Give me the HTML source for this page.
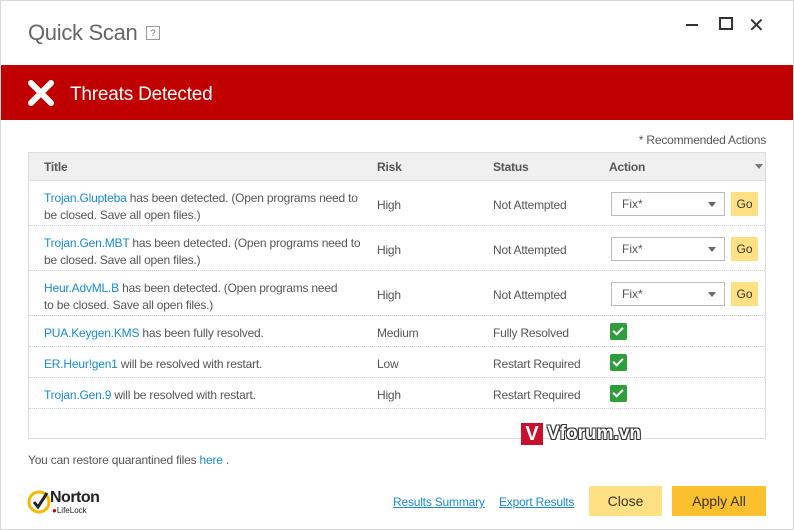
<!DOCTYPE html><html><head><style>
body{margin:0;width:794px;height:530px;background:#fff;font-family:"Liberation Sans",sans-serif;position:relative;overflow:hidden;color:#555}
.a{position:absolute}
.win{left:0;top:0;width:792px;height:528px;border:1px solid #d8d8d8}
.t{font-size:12px;color:#555;letter-spacing:-0.2px}
a,.lk{color:#1a8bd0;text-decoration:none}
.row{position:absolute;left:29px;width:736px;border-bottom:1px dotted #ccc}
.sel{position:absolute;left:611px;width:112px;height:22px;border:1px solid #bbb;font-size:12px;line-height:22px;text-indent:10px;color:#555}
.sel:after{content:"";position:absolute;right:8px;top:9px;border:4px solid transparent;border-top:5px solid #666}
.go{position:absolute;left:731px;width:27px;height:24px;background:#ffe082;font-size:12px;line-height:24px;text-align:center;color:#333}
.ck{position:absolute;left:610px;width:17px;height:17px;background:#2e9e3a;border-radius:2px}
.ck:after{content:"";position:absolute;left:5px;top:2px;width:4px;height:8px;border:solid #fff;border-width:0 2px 2px 0;transform:rotate(45deg)}
</style></head><body>
<div class="a win"></div>
<div class="a" style="left:28px;top:20px;font-size:22px;color:#666;letter-spacing:-0.3px">Quick Scan</div>
<div class="a" style="left:146px;top:26px;width:12px;height:12px;border:1px solid #999;font-size:9px;text-align:center;line-height:12px;color:#666">?</div>
<div class="a" style="left:686px;top:24px;width:12px;border-top:2px solid #333;top:24px"></div>
<div class="a" style="left:719px;top:17px;width:10px;height:9px;border:2px solid #333"></div>
<div class="a" style="left:748px;top:13px;font-size:20px;color:#333">✕</div>
<div class="a" style="left:1px;top:65px;width:792px;height:55px;background:#c00000"></div>
<svg class="a" style="left:27px;top:79px" width="28" height="28"><path d="M4 4L24 24M24 4L4 24" stroke="#fff" stroke-width="6" stroke-linecap="round"/></svg>
<div class="a" style="left:70px;top:84px;font-size:19px;color:#fff;letter-spacing:-0.2px">Threats Detected</div>
<div class="a t" style="right:28px;top:133px">* Recommended Actions</div>
<div class="a" style="left:28px;top:152px;width:736px;height:285px;border:1px solid #ddd"></div>
<div class="a" style="left:29px;top:153px;width:736px;height:27px;background:#f0f0f0;border-bottom:1px solid #ddd"></div>
<div class="a t" style="left:44px;top:160px;font-weight:bold">Title</div>
<div class="a t" style="left:377px;top:160px;font-weight:bold">Risk</div>
<div class="a t" style="left:493px;top:160px;font-weight:bold">Status</div>
<div class="a t" style="left:609px;top:160px;font-weight:bold">Action</div>
<div class="a" style="left:755px;top:164px;border:4px solid transparent;border-top:5px solid #777"></div>

<div class="row" style="top:181px;height:44px"></div>
<div class="a t" style="left:44px;top:190px;width:318px;line-height:17px"><span class="lk">Trojan.Glupteba</span> has been detected. (Open programs need to be closed. Save all open files.)</div>
<div class="a t" style="left:377px;top:198px">High</div><div class="a t" style="left:493px;top:198px">Not Attempted</div>
<div class="sel" style="top:192px">Fix*</div><div class="go" style="top:192px">Go</div>

<div class="row" style="top:226px;height:44px"></div>
<div class="a t" style="left:44px;top:235px;width:318px;line-height:17px"><span class="lk">Trojan.Gen.MBT</span> has been detected. (Open programs need to be closed. Save all open files.)</div>
<div class="a t" style="left:377px;top:243px">High</div><div class="a t" style="left:493px;top:243px">Not Attempted</div>
<div class="sel" style="top:237px">Fix*</div><div class="go" style="top:237px">Go</div>

<div class="row" style="top:271px;height:44px"></div>
<div class="a t" style="left:44px;top:280px;width:306px;line-height:17px"><span class="lk">Heur.AdvML.B</span> has been detected. (Open programs need to be closed. Save all open files.)</div>
<div class="a t" style="left:377px;top:288px">High</div><div class="a t" style="left:493px;top:288px">Not Attempted</div>
<div class="sel" style="top:282px">Fix*</div><div class="go" style="top:282px">Go</div>

<div class="row" style="top:316px;height:30px"></div>
<div class="a t" style="left:44px;top:326px"><span class="lk">PUA.Keygen.KMS</span> has been fully resolved.</div>
<div class="a t" style="left:377px;top:326px">Medium</div><div class="a t" style="left:493px;top:326px">Fully Resolved</div><div class="ck" style="top:323px"></div>

<div class="row" style="top:347px;height:30px"></div>
<div class="a t" style="left:44px;top:357px"><span class="lk">ER.Heur!gen1</span> will be resolved with restart.</div>
<div class="a t" style="left:377px;top:357px">Low</div><div class="a t" style="left:493px;top:357px">Restart Required</div><div class="ck" style="top:354px"></div>

<div class="row" style="top:378px;height:30px"></div>
<div class="a t" style="left:44px;top:388px"><span class="lk">Trojan.Gen.9</span> will be resolved with restart.</div>
<div class="a t" style="left:377px;top:388px">High</div><div class="a t" style="left:493px;top:388px">Restart Required</div><div class="ck" style="top:385px"></div>

<div class="a" style="left:521px;top:423px;width:22px;height:22px;background:#c8102e;color:#fff;font-weight:bold;font-size:20px;line-height:22px;text-align:center">V</div>
<div class="a" style="left:547px;top:423px;font-size:19px;font-weight:bold;color:#fff;text-shadow:-1px -1px 0 #333,1px -1px 0 #333,-1px 1px 0 #333,1px 1px 0 #333">Vforum.vn</div>

<div class="a t" style="left:28px;top:453px">You can restore quarantined files <span class="lk">here</span> .</div>
<svg class="a" style="left:27px;top:489px" width="26" height="26"><circle cx="12" cy="13" r="10" fill="none" stroke="#f5b800" stroke-width="3"/><path d="M7 13l4 5 9-14" fill="none" stroke="#222" stroke-width="3"/></svg>
<div class="a" style="left:50px;top:489px;font-size:16px;font-weight:bold;color:#222;letter-spacing:-0.5px">Norton</div>
<div class="a" style="left:52px;top:506px;font-size:8px;color:#222"><span style="color:#c00">●</span>LifeLock</div>
<div class="a t" style="left:393px;top:495px;text-decoration:underline;color:#1a8bd0">Results Summary</div>
<div class="a t" style="left:499px;top:495px;text-decoration:underline;color:#1a8bd0">Export Results</div>
<div class="a" style="left:589px;top:486px;width:73px;height:30px;background:#ffe082;font-size:14px;line-height:30px;text-align:center;color:#333">Close</div>
<div class="a" style="left:672px;top:486px;width:94px;height:30px;background:#fbc02d;font-size:14px;line-height:30px;text-align:center;color:#333">Apply All</div>
</body></html>
